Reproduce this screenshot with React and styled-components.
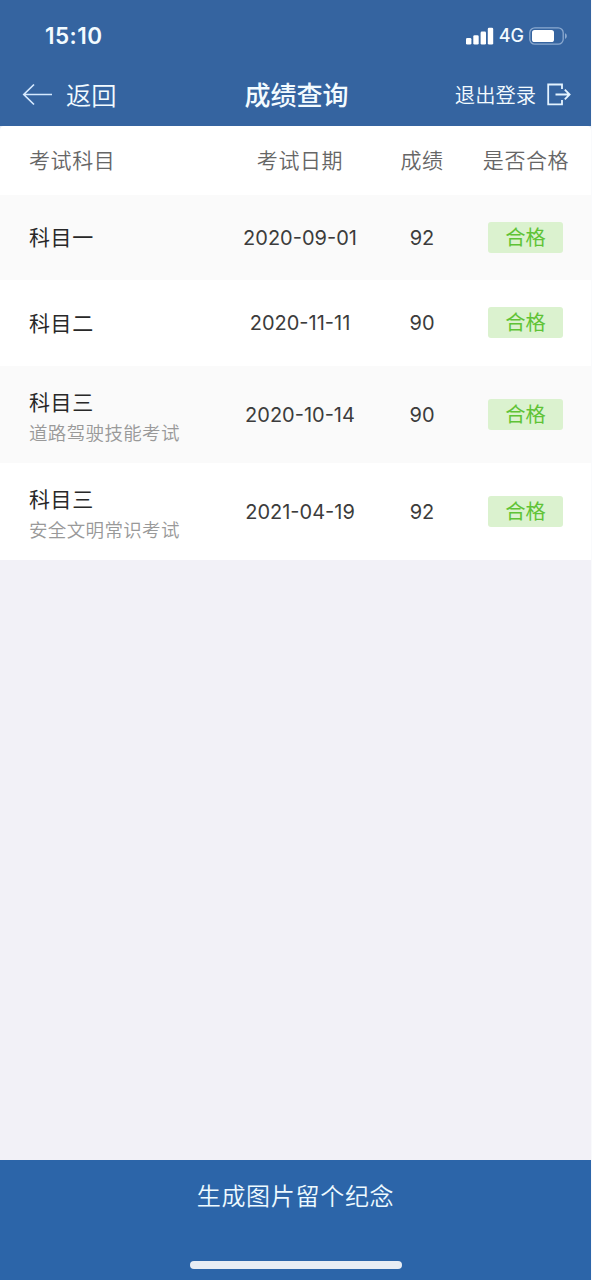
import React from 'react';
import styled, { createGlobalStyle } from 'styled-components';

const GlobalStyle = createGlobalStyle`
  * { box-sizing: border-box; }
  body {
    margin: 0;
    background: #f9fafc;
    font-family: Inter, 'Noto Sans CJK SC', sans-serif;
  }
`;

const Screen = styled.div`
  width: 591px;
  height: 1280px;
  display: flex;
  flex-direction: column;
  background: #f2f1f7;
`;

const Header = styled.header`
  height: 126px;
  background: #3564a0;
  color: #f3fbff;
`;

const StatusBar = styled.div`
  height: 64px;
  padding: 8px 23px 0 45px;
  display: flex;
  align-items: center;
  justify-content: space-between;
`;

const Clock = styled.span`
  font-size: 22.5px;
  font-weight: 600;
  line-height: 28px;
  letter-spacing: 0.45px;
`;

const StatusIcons = styled.div`
  display: flex;
  align-items: center;
`;

const Network = styled.span`
  margin: 0 5px 0 5px;
  font-size: 18px;
  font-weight: 500;
  line-height: 24px;
`;

const NavBar = styled.nav`
  height: 62px;
  padding: 0 20px 0 22px;
  display: grid;
  grid-template-columns: 1fr auto 1fr;
  align-items: center;
`;

const NavAction = styled.button`
  padding: 0;
  border: 0;
  background: none;
  color: inherit;
  font-family: inherit;
  font-size: ${(p) => p.$size}px;
  font-weight: 350;
  line-height: 36px;
  display: flex;
  align-items: center;
  gap: ${(p) => p.$gap}px;
  justify-self: ${(p) => p.$side};
`;

const NavLabel = styled.span`
  padding-top: 1px;
`;

const Title = styled.h1`
  margin: 0;
  padding-top: 2px;
  font-size: 26px;
  font-weight: 500;
  line-height: 36px;
`;

const gridColumns = '193px 156px 88px 120px';

const TableHead = styled.div`
  height: 69px;
  padding: 0 0 3px 29px;
  display: grid;
  grid-template-columns: ${gridColumns};
  align-items: center;
  background: #fff;
  border-radius: 4px 4px 0 0;
  color: #666;
  font-size: 21px;
  font-weight: 350;
  letter-spacing: 0.6px;
`;

const TableTop = styled.div`
  background: #e4ecf5;
`;

const Row = styled.div`
  height: ${(p) => p.$height}px;
  padding-left: 29px;
  display: grid;
  grid-template-columns: ${gridColumns};
  align-items: center;
  background: ${(p) => (p.$shaded ? '#fafafa' : '#fff')};
`;

const Cell = styled.div`
  text-align: center;
`;

const Value = styled(Cell)`
  color: #3c3c3c;
  font-size: 20px;
`;

const SubjectCell = styled.div`
  padding-top: ${(p) => (p.$detailed ? 6 : 1)}px;
`;

const Subject = styled.div`
  color: #282828;
  font-size: 21px;
  font-weight: 400;
  line-height: 30px;
  letter-spacing: 0.6px;
`;

const Detail = styled.div`
  color: #999;
  font-size: 18.5px;
  font-weight: 350;
  line-height: 30px;
  letter-spacing: 0.35px;
`;

const Badge = styled.span`
  width: 75px;
  height: 31px;
  margin: 0 auto 1px 22px;
  display: flex;
  align-items: center;
  justify-content: center;
  border-radius: 3px;
  background: #dbf2cf;
  color: #5fc336;
  font-size: 20.3px;
  line-height: 31px;
`;

const Footer = styled.footer`
  height: 120px;
  margin-top: auto;
  padding: 19px 0 11px;
  display: flex;
  flex-direction: column;
  align-items: center;
  justify-content: space-between;
  background: #2c65a9;
`;

const SaveButton = styled.button`
  padding: 0;
  border: 0;
  background: none;
  color: #eefaff;
  font-family: inherit;
  font-size: 24px;
  font-weight: 350;
  line-height: 36px;
  letter-spacing: 0.7px;
`;

const HomeIndicator = styled.div`
  width: 212px;
  height: 8px;
  border-radius: 4px;
  background: #e8edf4;
`;

const results = [
  { subject: '科目一', date: '2020-09-01', score: 92, height: 85 },
  { subject: '科目二', date: '2020-11-11', score: 90, height: 86 },
  { subject: '科目三', detail: '道路驾驶技能考试', date: '2020-10-14', score: 90, height: 97 },
  { subject: '科目三', detail: '安全文明常识考试', date: '2021-04-19', score: 92, height: 97 },
];

const SignalIcon = () => (
  <svg width="28" height="18" viewBox="0 0 28 18" fill="#fff">
    <rect x="0" y="11" width="5.4" height="6.5" rx="1.3" />
    <rect x="7.3" y="8.3" width="5.4" height="9.2" rx="1.3" />
    <rect x="14.6" y="4.6" width="5.4" height="12.9" rx="1.3" />
    <rect x="21.8" y="0.8" width="5.4" height="16.7" rx="1.3" />
  </svg>
);

const BatteryIcon = () => (
  <svg width="39" height="18" viewBox="0 0 39 18">
    <rect x="0.8" y="0.8" width="33.4" height="16.4" rx="5" fill="none" stroke="#8ba9cf" strokeWidth="1.3" />
    <rect x="3" y="3" width="22" height="12" rx="2.6" fill="#fff" />
    <path d="M36 6.2c2.4.8 2.4 4.8 0 5.6z" fill="#8ba9cf" />
  </svg>
);

const BackIcon = () => (
  <svg width="31" height="24" viewBox="0 0 31 24" fill="none" stroke="#d5e9ff" strokeWidth="1.7">
    <path d="M12 1.5 1.8 11.5 12 21.5M1.8 11.5H30" />
  </svg>
);

const LogoutIcon = () => (
  <svg width="25" height="24" viewBox="0 0 25 24" fill="none" stroke="#e4f3ff" strokeWidth="1.8">
    <path d="M16 6V1.5H2.2V21.3H16V17M9.5 11.5H23.5M18.8 6.7 23.6 11.5 18.8 16.3" />
  </svg>
);

export default function App() {
  return (
    <Screen>
      <GlobalStyle />
      <Header>
        <StatusBar>
          <Clock>15:10</Clock>
          <StatusIcons>
            <SignalIcon />
            <Network>4G</Network>
            <BatteryIcon />
          </StatusIcons>
        </StatusBar>
        <NavBar>
          <NavAction $size={25.3} $gap={13} $side="start">
            <BackIcon />
            <NavLabel>返回</NavLabel>
          </NavAction>
          <Title>成绩查询</Title>
          <NavAction $size={20.3} $gap={10} $side="end">
            <NavLabel>退出登录</NavLabel>
            <LogoutIcon />
          </NavAction>
        </NavBar>
      </Header>
      <TableTop>
        <TableHead>
          <div>考试科目</div>
          <Cell>考试日期</Cell>
          <Cell>成绩</Cell>
          <Cell>是否合格</Cell>
        </TableHead>
      </TableTop>
      {results.map((r, i) => (
        <Row key={r.date} $height={r.height} $shaded={i % 2 === 0}>
          <SubjectCell $detailed={Boolean(r.detail)}>
            <Subject>{r.subject}</Subject>
            {r.detail && <Detail>{r.detail}</Detail>}
          </SubjectCell>
          <Value>{r.date}</Value>
          <Value>{r.score}</Value>
          <Badge>合格</Badge>
        </Row>
      ))}
      <Footer>
        <SaveButton>生成图片留个纪念</SaveButton>
        <HomeIndicator />
      </Footer>
    </Screen>
  );
}
